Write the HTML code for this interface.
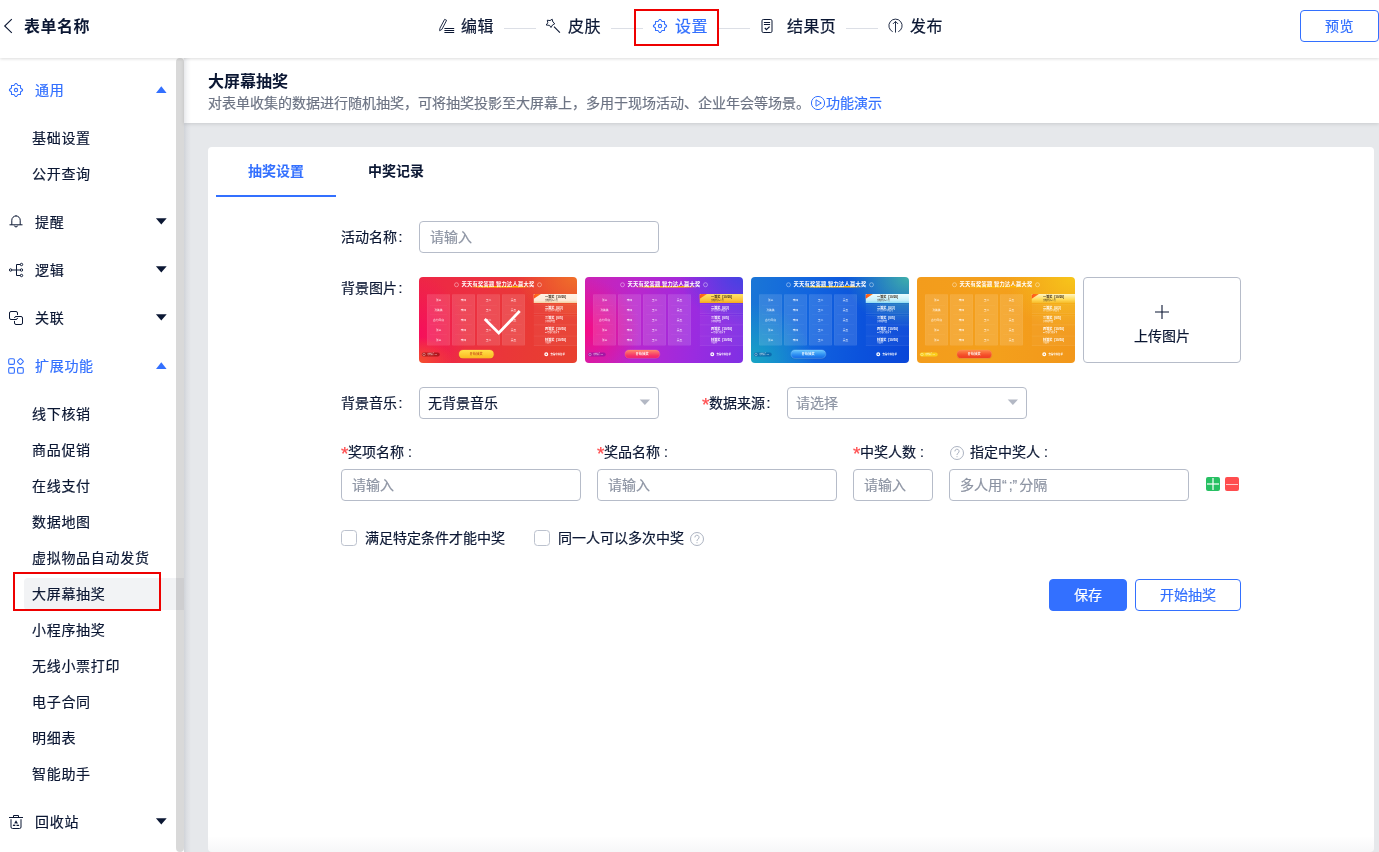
<!DOCTYPE html>
<html lang="zh-CN">
<head>
<meta charset="utf-8">
<title>大屏幕抽奖</title>
<style>
*{box-sizing:border-box;margin:0;padding:0}
html,body{width:1379px;height:852px;overflow:hidden;background:#e6e8eb}
body{-webkit-text-stroke:.2px;font-family:"Liberation Sans","Noto Sans CJK SC",sans-serif;font-size:14px;color:#0b1733;position:relative}
#root{position:absolute;left:0;top:0;width:1379px;height:852px;overflow:hidden;will-change:transform}
.abs{position:absolute}
b{font-weight:700}
#title,.bold{-webkit-text-stroke:0}
i{font-style:normal}
#top{position:absolute;left:0;top:0;width:1379px;height:58px;background:#fff;box-shadow:0 1px 3px rgba(0,0,0,.14);z-index:5}
#title{position:absolute;left:24px;top:15px;font-size:16px;font-weight:700;line-height:24px;letter-spacing:.5px;white-space:nowrap}
.step{position:absolute;top:15px;font-size:16px;line-height:24px;white-space:nowrap;letter-spacing:.4px}
.sline{position:absolute;top:28px;height:1px;width:32px;background:#dcdfe6}
#preview{position:absolute;left:1300px;top:10px;width:79px;height:32px;border:1px solid #3370ff;border-radius:4px;color:#3370ff;font-size:14px;line-height:30px;text-align:center;background:#fff;letter-spacing:.5px}
#side{position:absolute;left:0;top:58px;width:184px;height:794px;background:#fff}
#sbar{position:absolute;left:176px;top:58px;width:8px;height:794px;background:rgba(0,0,0,.15);border-radius:4px;z-index:3}
.m1{position:absolute;left:35px;font-size:14px;line-height:20px;white-space:nowrap;letter-spacing:.7px}
.m2{position:absolute;left:32px;font-size:14px;line-height:20px;white-space:nowrap;letter-spacing:.7px}
.blue{color:#3370ff}
.tri{position:absolute;left:155px;width:13px;height:8px;overflow:visible}
.ic{position:absolute;left:8px;width:16px;height:16px;overflow:visible}
#head{position:absolute;left:184px;top:58px;width:1195px;height:65px;background:#fff;box-shadow:0 1px 4px rgba(0,0,0,.13)}
#card{position:absolute;left:208px;top:147px;width:1166px;height:705px;background:#fff;border-radius:4px}
.lab{position:absolute;font-size:14px;line-height:20px;white-space:nowrap}
.inp{position:absolute;height:32px;border:1px solid #b6bcc9;border-radius:4px;background:#fff;font-size:14px;line-height:30px;padding-left:10px;color:#8d94a3;white-space:nowrap}
.red{color:#f5222d}
.cb{position:absolute;width:16px;height:16px;border:1px solid #bcc2ce;border-radius:3.5px;background:#fff}
.btn{position:absolute;height:32px;border-radius:4px;font-size:14px;line-height:30px;text-align:center;border:1px solid #3370ff}
.dd{position:absolute;width:12px;height:7px;overflow:visible}
/* thumbnails */
.th{position:absolute;top:277px;width:158px;height:86px;border-radius:4px;overflow:hidden}
.thi{-webkit-text-stroke:0;position:absolute;left:0;top:0;width:632px;height:344px;transform:scale(.25);transform-origin:0 0;color:#fff}
.tring{position:absolute;width:18px;height:18px;border:2.5px solid rgba(255,255,255,.8);border-radius:50%}
.ttl{position:absolute;left:0;top:14px;width:632px;text-align:center;font-size:21px;font-weight:700;line-height:32px;white-space:nowrap;letter-spacing:.9px}
.tul{position:absolute;left:196px;top:36px;width:250px;height:6px;background:linear-gradient(90deg,rgba(255,190,0,0) 0%,#ffc400 22%,#ffb400 85%,rgba(255,176,0,0) 100%)}
.gcol{position:absolute;top:69px;width:92px;height:205px;padding-top:3px;background:rgba(255,255,255,.13);border:1px solid rgba(255,255,255,.12);border-radius:4px}
.gc{height:39.7px;margin:0 11px;border-bottom:1.5px solid rgba(255,255,255,.14);font-size:11px;line-height:40px;text-align:center;white-space:nowrap;color:rgba(255,255,255,.9)}
.gc.nb{border-bottom:none}
.pz{position:absolute;left:459px;width:173px;height:38px;padding-left:45px;border-top:1.5px solid rgba(255,255,255,.22);border-bottom:1.5px solid rgba(255,255,255,.22);background:rgba(255,255,255,.04)}
.pz b{display:block;font-size:12.5px;line-height:14px;margin-top:4px;white-space:nowrap;word-spacing:4px}
.pz i{display:block;font-size:8px;line-height:9px;margin-top:1px;white-space:nowrap}
.pz.p1{border:none;height:36px;color:#3a2a1a;overflow:hidden}
.rib{position:absolute;left:-22px;top:-4px;width:70px;height:13px;background:linear-gradient(90deg,#ff3b1a,#ff9a1a);transform:rotate(-33deg)}
.bdg{position:absolute;left:11px;top:302px;width:72px;height:16px;border-radius:8px;font-size:7px;line-height:16px;padding-left:22px;white-space:nowrap;color:rgba(255,255,255,.9)}
.bdr{position:absolute;left:3px;top:2px;width:12px;height:12px;border:2px solid rgba(255,255,255,.7);border-radius:50%}
.go{position:absolute;left:159px;top:291px;width:141px;height:35px;border-radius:18px;border:1.5px solid;font-size:12px;font-weight:700;line-height:32px;text-align:center;letter-spacing:1px;box-shadow:0 2px 4px rgba(0,0,0,.15)}
.vring{position:absolute;left:501px;top:301px;width:16px;height:16px;border:5px solid #fff;border-radius:50%}
.vtxt{position:absolute;left:526px;top:301px;font-size:9.5px;font-weight:700;line-height:16px;white-space:nowrap}

.star{position:absolute;font-size:19px;line-height:20px;color:#ff4d4f;font-family:"Liberation Sans",sans-serif}
.co{margin-left:1.5px}
.q{letter-spacing:2px}

</style>
</head>
<body>
<div id="root">
<!-- TOP BAR -->
<div id="top">
  <svg class="abs" style="left:3px;top:18px" width="10" height="16" viewBox="0 0 10 16"><path d="M8.8 1.2 L1.7 8 L8.8 14.8" fill="none" stroke="#0b1733" stroke-width="1.1"/></svg>
  <div id="title">表单名称</div>

  <svg class="abs" style="left:438px;top:17px" width="18" height="18" viewBox="0 0 18 18" fill="none" stroke="#0b1733">
    <path d="M6.6 2.4 L8.6 3.3 L3.9 12.4 L1.6 13.7 L1.9 11.3 Z" stroke-width=".9" stroke-linejoin="round"/>
    <path d="M6.4 11.5 H16.2 M6.4 13.5 H16.2 M6.4 15.5 H16.2" stroke-width="1"/>
  </svg>
  <div class="step" style="left:461px">编辑</div>
  <div class="sline" style="left:504px"></div>

  <svg class="abs" style="left:544px;top:17px" width="18" height="18" viewBox="0 0 18 18" fill="none" stroke="#0b1733">
    <path d="M8.2 2.2 L8.9 5.0 L10.8 6.7 L8.6 7.9 L7.0 10.5 L5.6 8.4 L2.2 8.0 L3.8 5.8 L3.3 3.2 L6.0 3.6 Z" stroke-width=".95" stroke-linejoin="round"/>
    <path d="M10 9.7 L15.9 15.6" stroke-width="1.1"/>
  </svg>
  <div class="step" style="left:568px">皮肤</div>
  <div class="sline" style="left:611px"></div>

  <svg class="abs" style="left:652px;top:18px" width="16" height="16" viewBox="0 0 16 16"><path d="M7.45 1.45 L8.55 1.45 L10.00 3.50 L12.50 3.50 L12.50 6.00 L14.55 7.45 L14.55 8.55 L12.50 10.00 L12.50 12.50 L10.00 12.50 L8.55 14.55 L7.45 14.55 L6.00 12.50 L3.50 12.50 L3.50 10.00 L1.45 8.55 L1.45 7.45 L3.50 6.00 L3.50 3.50 L6.00 3.50 Z" fill="none" stroke="#3370ff" stroke-width="1.05" stroke-linejoin="round"/><circle cx="8" cy="8" r="1.65" fill="none" stroke="#3370ff" stroke-width="1.05"/></svg>
  <div class="step blue" style="left:675px">设置</div>
  <div class="abs" style="left:634px;top:9px;width:85px;height:37px;border:2px solid #ee0000"></div>
  <div class="sline" style="left:719px;width:31px"></div>

  <svg class="abs" style="left:759px;top:17px" width="16" height="18" viewBox="0 0 16 18" fill="none" stroke="#0b1733">
    <rect x="3" y="2.5" width="10" height="13" rx="1.3" stroke-width="1"/>
    <path d="M4.9 5.5 H11.1 M4.9 7.5 H11.1" stroke-width="1"/>
    <path d="M5.8 10.9 L7.4 12.6 L10.6 9.6" stroke-width="1.3"/>
  </svg>
  <div class="step" style="left:787px">结果页</div>
  <div class="sline" style="left:846px"></div>

  <svg class="abs" style="left:887px;top:17.3px" width="18" height="18" viewBox="0 0 18 18" fill="none" stroke="#0b1733">
    <path d="M5.7 14.7 A6.6 6.6 0 1 1 11.3 14.7" stroke-width=".9"/>
    <path d="M8.5 4.6 V15.6 M6.0 6.9 L8.5 4.4 L11.0 6.9" stroke-width=".9"/>
  </svg>
  <div class="step" style="left:910px">发布</div>
  <div id="preview">预览</div>
</div>

<!-- SIDEBAR -->
<div id="side"></div>
<div id="sbar"></div>
<div id="menu">
  <svg class="ic" style="top:82px" viewBox="0 0 16 16"><path d="M7.45 1.45 L8.55 1.45 L10.00 3.50 L12.50 3.50 L12.50 6.00 L14.55 7.45 L14.55 8.55 L12.50 10.00 L12.50 12.50 L10.00 12.50 L8.55 14.55 L7.45 14.55 L6.00 12.50 L3.50 12.50 L3.50 10.00 L1.45 8.55 L1.45 7.45 L3.50 6.00 L3.50 3.50 L6.00 3.50 Z" fill="none" stroke="#3370ff" stroke-width="1.05" stroke-linejoin="round"/><circle cx="8" cy="8" r="1.65" fill="none" stroke="#3370ff" stroke-width="1.05"/></svg>
  <div class="m1 blue" style="top:80px">通用</div><svg class="tri" style="top:86px" viewBox="0 0 13 8"><path d="M6.3 0.3 L11.6 6.9 H1 Z" fill="#3370ff"/></svg>
  <div class="m2" style="top:128px">基础设置</div>
  <div class="m2" style="top:164px">公开查询</div>

  <svg class="ic" style="top:214px" viewBox="0 0 16 16" fill="none" stroke="#0b1733" stroke-width="1">
    <path d="M3.8 10.8 V6.2 A4.2 4.2 0 0 1 12.2 6.2 V10.8"/><path d="M1.5 10.8 H14.5"/><path d="M6.3 11.6 A1.75 1.75 0 0 0 9.7 11.6"/><path d="M8 1.2 V2"/>
  </svg>
  <div class="m1" style="top:212px">提醒</div><svg class="tri" style="top:218px" viewBox="0 0 13 8"><path d="M0.9 0.2 H11.7 L6.3 6.6 Z" fill="#0b1733"/></svg>

  <svg class="ic" style="top:262px" viewBox="0 0 16 16" fill="none" stroke="#0b1733" stroke-width="1">
    <circle cx="2.6" cy="8" r="1.2"/><circle cx="13.5" cy="2.5" r="1.2"/><circle cx="13.5" cy="8" r="1.2"/><circle cx="13.5" cy="13.5" r="1.2"/>
    <path d="M3.8 8 H12.3 M12.3 2.5 H8.5 V13.5 H12.3"/>
  </svg>
  <div class="m1" style="top:260px">逻辑</div><svg class="tri" style="top:266px" viewBox="0 0 13 8"><path d="M0.9 0.2 H11.7 L6.3 6.6 Z" fill="#0b1733"/></svg>

  <svg class="ic" style="top:310px" viewBox="0 0 16 16" fill="none" stroke="#0b1733" stroke-width="1" stroke-linecap="round">
    <path d="M9.5 4.6 V3 A1.5 1.5 0 0 0 8 1.5 H3 A1.5 1.5 0 0 0 1.5 3 V8 A1.5 1.5 0 0 0 3 9.500 H8 A1.5 1.5 0 0 0 9.5 8.3"/>
    <path d="M6.5 7.6 A1.5 1.5 0 0 1 8 6.5 H13 A1.5 1.5 0 0 1 14.5 8 V13 A1.5 1.5 0 0 1 13 14.5 H8 A1.5 1.5 0 0 1 6.5 13 V11.3"/>
  </svg>
  <div class="m1" style="top:308px">关联</div><svg class="tri" style="top:314px" viewBox="0 0 13 8"><path d="M0.9 0.2 H11.7 L6.3 6.6 Z" fill="#0b1733"/></svg>

  <svg class="ic" style="top:358px" viewBox="0 0 16 16" fill="none" stroke="#3370ff" stroke-width="1.1">
    <rect x="0.7" y="0.7" width="5.7" height="5.7" rx="1.3"/><rect x="0.7" y="9.6" width="5.7" height="5.7" rx="1.3"/><rect x="9.6" y="9.6" width="5.7" height="5.7" rx="1.3"/>
    <rect x="10.1" y="1.2" width="4.6" height="4.6" rx="0.9" transform="rotate(45 12.4 3.5)"/>
  </svg>
  <div class="m1 blue" style="top:356px">扩展功能</div><svg class="tri" style="top:362px" viewBox="0 0 13 8"><path d="M6.3 0.3 L11.6 6.9 H1 Z" fill="#3370ff"/></svg>
  <div class="m2" style="top:404px">线下核销</div>
  <div class="m2" style="top:440px">商品促销</div>
  <div class="m2" style="top:476px">在线支付</div>
  <div class="m2" style="top:512px">数据地图</div>
  <div class="m2" style="top:548px">虚拟物品自动发货</div>
  <div class="abs" style="left:24px;top:578px;width:160px;height:32px;background:#f2f3f5;border-radius:4px 0 0 4px"></div>
  <div class="abs" style="left:13px;top:572px;width:148px;height:39px;border:2px solid #ee0000"></div>
  <div class="m2" style="top:584px">大屏幕抽奖</div>
  <div class="m2" style="top:620px">小程序抽奖</div>
  <div class="m2" style="top:656px">无线小票打印</div>
  <div class="m2" style="top:692px">电子合同</div>
  <div class="m2" style="top:728px">明细表</div>
  <div class="m2" style="top:764px">智能助手</div>

  <svg class="ic" style="top:814px" viewBox="0 0 16 16" fill="none" stroke="#0b1733" stroke-width="1">
    <path d="M1 3.500 H15 M5.5 3.5 V1.5 H10.5 V3.5"/>
    <path d="M3 5.2 V13 A1.5 1.5 0 0 0 4.5 14.5 H11.500 A1.5 1.5 0 0 0 13 13 V5.2"/>
    <path d="M8 7.4 L10.3 11.4 H5.7 Z" stroke-width="1.2" stroke-dasharray="2.6 1.2"/>
  </svg>
  <div class="m1" style="top:812px">回收站</div><svg class="tri" style="top:818px" viewBox="0 0 13 8"><path d="M0.9 0.2 H11.7 L6.3 6.6 Z" fill="#0b1733"/></svg>
</div>

<!-- MAIN HEADER -->
<div id="head">
  <div class="abs bold" style="left:24px;top:12px;font-size:16px;font-weight:700;line-height:24px">大屏幕抽奖</div>
  <div class="abs" style="left:24px;top:35px;font-size:14px;line-height:20px;color:#6d7484;white-space:nowrap">对表单收集的数据进行随机抽奖，可将抽奖投影至大屏幕上，多用于现场活动、企业年会等场景。</div>
  <svg class="abs" style="left:626px;top:37px" width="16" height="16" viewBox="0 0 16 16" fill="none" stroke="#3370ff" stroke-width="1"><circle cx="8" cy="8" r="6.6"/><path d="M6 4.8 L11.3 8 L6 11.2 Z" stroke-linejoin="round"/></svg>
  <div class="abs blue" style="left:642px;top:35px;font-size:14px;line-height:20px;white-space:nowrap">功能演示</div>
</div>

<!-- CARD -->
<div id="card"></div>
<div class="abs" style="left:208px;top:836px;width:1166px;height:16px;border-radius:0 0 4px 4px;background:linear-gradient(180deg,rgba(30,40,70,0) 0%,rgba(30,40,70,.04) 100%)"></div>
<div class="abs" style="left:184px;top:58px;width:7px;height:794px;background:linear-gradient(90deg,rgba(20,30,60,.10) 0%,rgba(20,30,60,.04) 45%,rgba(20,30,60,0) 100%)"></div>
<div id="form">
  <div class="lab blue bold" style="left:248px;top:161px;font-weight:700">抽奖设置</div>
  <div class="lab bold" style="left:368px;top:161px;font-weight:700">中奖记录</div>
  <div class="abs" style="left:216px;top:195px;width:120px;height:2px;background:#3370ff"></div>

  <div class="lab" style="left:341px;top:227px">活动名称<span class="co">:</span></div>
  <div class="inp" style="left:419px;top:221px;width:240px">请输入</div>

  <div class="lab" style="left:341px;top:278px">背景图片<span class="co">:</span></div>
<div class="th" style="left:419px;background:radial-gradient(ellipse 38% 50% at 100% 0%,#f0702a 0%,rgba(240,112,42,0) 100%),radial-gradient(ellipse 22% 30% at 0% 100%,#f4502c 0%,rgba(244,80,44,0) 100%),radial-gradient(ellipse 30% 65% at 0% 65%,#f60f5c 0%,rgba(246,15,92,0) 100%),linear-gradient(100deg,#ee2646 0%,#ec3040 35%,#e93a35 70%,#e8402f 100%)">
<div class="thi">
<div class="tring" style="left:141px;top:22px"></div><div class="tring" style="left:473px;top:22px"></div>
<div class="tul"></div>
<div class="ttl">天天有奖答题 智力达人赢大奖</div>
<div class="gcol" style="left:32px">
<div class="gc">张三</div>
<div class="gc">孙美美</div>
<div class="gc">古力风袅</div>
<div class="gc">张三</div>
<div class="gc nb">张三</div>
</div>
<div class="gcol" style="left:132px">
<div class="gc">李四</div>
<div class="gc">李四</div>
<div class="gc">李四</div>
<div class="gc">李四</div>
<div class="gc nb">李四</div>
</div>
<div class="gcol" style="left:232px">
<div class="gc">王二</div>
<div class="gc">王二</div>
<div class="gc">王二</div>
<div class="gc">王二</div>
<div class="gc nb">王二</div>
</div>
<div class="gcol" style="left:332px">
<div class="gc">吴五</div>
<div class="gc">吴五</div>
<div class="gc">吴五</div>
<div class="gc">吴五</div>
<div class="gc nb">吴五</div>
</div>
<div class="pz p1" style="top:68px;background:linear-gradient(180deg,#fff3e6 0%,#fdebd8 70%,#f5cf9e 100%)"><div class="rib"></div><b>一等奖 [10/20]</b><i>沃柑橙子1公斤</i></div>
<div class="pz" style="top:110px"><b>二等奖 [0/3]</b><i>蓝牙耳机价值百元</i></div>
<div class="pz" style="top:153px"><b>三等奖 [0/5]</b><i>小米充电宝</i></div>
<div class="pz" style="top:195px"><b>四等奖 [10/10]</b><i>50元话费充值卡</i></div>
<div class="pz" style="top:238px"><b>特等奖 [10/10]</b><i>代金券</i></div>
<div class="bdg" style="background:rgba(120,0,0,.55)"><span class="bdr"></span>素材编号 01</div>
<div class="go" style="background:linear-gradient(180deg,#ffe14a 0%,#fbb820 100%);border-color:#ffd23a;color:#c8501a">开始抽奖</div>
<div class="vring"></div><div class="vtxt">查看中奖名单</div>
<svg class="abs" style="left:0;top:0" width="632" height="344"><path d="M263 168 L319 224 L403 136" fill="none" stroke="#fff" stroke-width="11"/></svg>
</div></div><div class="th" style="left:585px;background:radial-gradient(ellipse 40% 55% at 100% 0%,#4542e2 0%,rgba(69,66,226,0) 100%),radial-gradient(ellipse 35% 60% at 0% 62%,#f40c86 0%,rgba(244,12,134,0) 100%),linear-gradient(95deg,#cc22b4 0%,#b727cf 35%,#9a2be0 70%,#7f30e4 100%)">
<div class="thi">
<div class="tring" style="left:141px;top:22px"></div><div class="tring" style="left:473px;top:22px"></div>
<div class="tul"></div>
<div class="ttl">天天有奖答题 智力达人赢大奖</div>
<div class="gcol" style="left:32px">
<div class="gc">张三</div>
<div class="gc">孙美美</div>
<div class="gc">古力风袅</div>
<div class="gc">张三</div>
<div class="gc nb">张三</div>
</div>
<div class="gcol" style="left:132px">
<div class="gc">李四</div>
<div class="gc">李四</div>
<div class="gc">李四</div>
<div class="gc">李四</div>
<div class="gc nb">李四</div>
</div>
<div class="gcol" style="left:232px">
<div class="gc">王二</div>
<div class="gc">王二</div>
<div class="gc">王二</div>
<div class="gc">王二</div>
<div class="gc nb">王二</div>
</div>
<div class="gcol" style="left:332px">
<div class="gc">吴五</div>
<div class="gc">吴五</div>
<div class="gc">吴五</div>
<div class="gc">吴五</div>
<div class="gc nb">吴五</div>
</div>
<div class="pz p1" style="top:68px;background:linear-gradient(180deg,#ffe36a 0%,#fbc43a 70%,#f3a820 100%)"><div class="rib"></div><b>一等奖 [10/20]</b><i>沃柑橙子1公斤</i></div>
<div class="pz" style="top:110px"><b>二等奖 [0/3]</b><i>蓝牙耳机价值百元</i></div>
<div class="pz" style="top:153px"><b>三等奖 [0/5]</b><i>小米充电宝</i></div>
<div class="pz" style="top:195px"><b>四等奖 [10/10]</b><i>50元话费充值卡</i></div>
<div class="pz" style="top:238px"><b>特等奖 [10/10]</b><i>代金券</i></div>
<div class="bdg" style="background:rgba(120,20,160,.55)"><span class="bdr"></span>素材编号 01</div>
<div class="go" style="background:linear-gradient(180deg,#ff8a6a 0%,#f5306a 70%,#ee1f74 100%);border-color:#ff9aa8;color:#fff">开始抽奖</div>
<div class="vring"></div><div class="vtxt">查看中奖名单</div>
</div></div><div class="th" style="left:751px;background:radial-gradient(ellipse 40% 60% at 100% 0%,#3fb0aa 0%,rgba(63,176,170,0) 100%),radial-gradient(ellipse 40% 70% at 0% 100%,#17a5c4 0%,rgba(23,165,196,0) 100%),linear-gradient(95deg,#1a76d6 0%,#1265df 35%,#0b52dc 70%,#0a46d8 100%)">
<div class="thi">
<div class="tring" style="left:141px;top:22px"></div><div class="tring" style="left:473px;top:22px"></div>
<div class="tul"></div>
<div class="ttl">天天有奖答题 智力达人赢大奖</div>
<div class="gcol" style="left:32px">
<div class="gc">张三</div>
<div class="gc">孙美美</div>
<div class="gc">古力风袅</div>
<div class="gc">张三</div>
<div class="gc nb">张三</div>
</div>
<div class="gcol" style="left:132px">
<div class="gc">李四</div>
<div class="gc">李四</div>
<div class="gc">李四</div>
<div class="gc">李四</div>
<div class="gc nb">李四</div>
</div>
<div class="gcol" style="left:232px">
<div class="gc">王二</div>
<div class="gc">王二</div>
<div class="gc">王二</div>
<div class="gc">王二</div>
<div class="gc nb">王二</div>
</div>
<div class="gcol" style="left:332px">
<div class="gc">吴五</div>
<div class="gc">吴五</div>
<div class="gc">吴五</div>
<div class="gc">吴五</div>
<div class="gc nb">吴五</div>
</div>
<div class="pz p1" style="top:68px;background:linear-gradient(180deg,#eafcff 0%,#c6f0fa 70%,#8fdcf2 100%)"><div class="rib"></div><b>一等奖 [10/20]</b><i>沃柑橙子1公斤</i></div>
<div class="pz" style="top:110px"><b>二等奖 [0/3]</b><i>蓝牙耳机价值百元</i></div>
<div class="pz" style="top:153px"><b>三等奖 [0/5]</b><i>小米充电宝</i></div>
<div class="pz" style="top:195px"><b>四等奖 [10/10]</b><i>50元话费充值卡</i></div>
<div class="pz" style="top:238px"><b>特等奖 [10/10]</b><i>代金券</i></div>
<div class="bdg" style="background:rgba(0,60,140,.45)"><span class="bdr"></span>素材编号 01</div>
<div class="go" style="background:linear-gradient(180deg,#6cc8ff 0%,#2a8cf2 60%,#1468e4 100%);border-color:#bfe6ff;color:#fff">开始抽奖</div>
<div class="vring"></div><div class="vtxt">查看中奖名单</div>
</div></div><div class="th" style="left:917px;background:radial-gradient(ellipse 45% 65% at 100% 0%,#f7c61a 0%,rgba(247,198,26,0) 100%),linear-gradient(95deg,#f39c1c 0%,#f4a01c 50%,#f2971a 100%)">
<div class="thi">
<div class="tring" style="left:141px;top:22px"></div><div class="tring" style="left:473px;top:22px"></div>
<div class="tul"></div>
<div class="ttl">天天有奖答题 智力达人赢大奖</div>
<div class="gcol" style="left:32px">
<div class="gc">张三</div>
<div class="gc">孙美美</div>
<div class="gc">古力风袅</div>
<div class="gc">张三</div>
<div class="gc nb">张三</div>
</div>
<div class="gcol" style="left:132px">
<div class="gc">李四</div>
<div class="gc">李四</div>
<div class="gc">李四</div>
<div class="gc">李四</div>
<div class="gc nb">李四</div>
</div>
<div class="gcol" style="left:232px">
<div class="gc">王二</div>
<div class="gc">王二</div>
<div class="gc">王二</div>
<div class="gc">王二</div>
<div class="gc nb">王二</div>
</div>
<div class="gcol" style="left:332px">
<div class="gc">吴五</div>
<div class="gc">吴五</div>
<div class="gc">吴五</div>
<div class="gc">吴五</div>
<div class="gc nb">吴五</div>
</div>
<div class="pz p1" style="top:68px;background:linear-gradient(180deg,#fff6c4 0%,#ffdc5a 60%,#f7bb2a 100%)"><div class="rib"></div><b>一等奖 [10/20]</b><i>沃柑橙子1公斤</i></div>
<div class="pz" style="top:110px"><b>二等奖 [0/3]</b><i>蓝牙耳机价值百元</i></div>
<div class="pz" style="top:153px"><b>三等奖 [0/5]</b><i>小米充电宝</i></div>
<div class="pz" style="top:195px"><b>四等奖 [10/10]</b><i>50元话费充值卡</i></div>
<div class="pz" style="top:238px"><b>特等奖 [10/10]</b><i>代金券</i></div>
<div class="bdg" style="background:rgba(250,215,30,.85)"><span class="bdr"></span>素材编号 01</div>
<div class="go" style="background:linear-gradient(180deg,#ff8a4a 0%,#f5502a 60%,#ee3a20 100%);border-color:#ffa070;color:#fff">开始抽奖</div>
<div class="vring"></div><div class="vtxt">查看中奖名单</div>
</div></div>
  <div class="abs" style="left:1083px;top:277px;width:158px;height:86px;border:1px solid #b6bcc9;border-radius:4px;background:#fff"></div>
  <svg class="abs" style="left:1154px;top:304px" width="16" height="16" viewBox="0 0 16 16"><path d="M8 1 V15 M1 8 H15" stroke="#0b1733" stroke-width="1.1" fill="none"/></svg>
  <div class="lab" style="left:1134px;top:326px">上传图片</div>

  <div class="lab" style="left:341px;top:393px">背景音乐<span class="co">:</span></div>
  <div class="inp" style="left:419px;top:387px;width:240px;color:#0b1733;padding-left:8px">无背景音乐</div>
  <svg class="dd" style="left:639px;top:399.3px" viewBox="0 0 12 7"><path d="M0.7 0.4 H11 L5.85 6 Z" fill="#b3b8c4"/></svg>
  <div class="star" style="left:702px;top:395px">*</div><div class="lab" style="left:709px;top:393px">数据来源<span class="co">:</span></div>
  <div class="inp" style="left:787px;top:387px;width:240px;padding-left:8px">请选择</div>
  <svg class="dd" style="left:1007px;top:399.3px" viewBox="0 0 12 7"><path d="M0.7 0.4 H11 L5.85 6 Z" fill="#b3b8c4"/></svg>

  <div class="star" style="left:341px;top:444px">*</div><div class="lab" style="left:348px;top:442px">奖项名称 :</div>
  <div class="star" style="left:597px;top:444px">*</div><div class="lab" style="left:604px;top:442px">奖品名称 :</div>
  <div class="star" style="left:853px;top:444px">*</div><div class="lab" style="left:860px;top:442px">中奖人数 :</div>
  <svg class="abs" style="left:949px;top:445px" width="16" height="16" viewBox="0 0 16 16" fill="none" stroke="#a3aaba" stroke-width=".9"><circle cx="8" cy="8" r="6.5"/><path d="M5.9 6.4 A2.1 2.1 0 1 1 8.9 8.2 Q8 8.8 8 10"/><path d="M8 11.2 V12.2"/></svg>
  <div class="lab" style="left:970px;top:442px">指定中奖人 :</div>
  <div class="inp" style="left:341px;top:469px;width:240px">请输入</div>
  <div class="inp" style="left:597px;top:469px;width:240px">请输入</div>
  <div class="inp" style="left:853px;top:469px;width:80px">请输入</div>
  <div class="inp" style="left:949px;top:469px;width:240px">多人用<span class="q">“</span>;<span class="q">”</span>分隔</div>
  <div class="abs" style="left:1206px;top:477px;width:14px;height:14px;border-radius:2px;background:#27c063"><div class="abs" style="left:6px;top:1px;width:2px;height:12px;background:rgba(255,255,255,.6)"></div><div class="abs" style="left:1px;top:6px;width:12px;height:2px;background:rgba(255,255,255,.6)"></div></div>
  <div class="abs" style="left:1225px;top:477px;width:14px;height:14px;border-radius:2px;background:#ff4d4f"><div class="abs" style="left:1px;top:6.5px;width:12px;height:1.6px;background:rgba(255,255,255,.7)"></div></div>

  <div class="cb" style="left:341px;top:530px"></div>
  <div class="lab" style="left:365px;top:528px">满足特定条件才能中奖</div>
  <div class="cb" style="left:534px;top:530px"></div>
  <div class="lab" style="left:558px;top:528px">同一人可以多次中奖</div>
  <svg class="abs" style="left:689px;top:531px" width="16" height="16" viewBox="0 0 16 16" fill="none" stroke="#a3aaba" stroke-width=".9"><circle cx="8" cy="8" r="6.5"/><path d="M5.9 6.4 A2.1 2.1 0 1 1 8.9 8.2 Q8 8.8 8 10"/><path d="M8 11.2 V12.2"/></svg>

  <div class="btn" style="left:1049px;top:579px;width:78px;background:#3370ff;color:#fff">保存</div>
  <div class="btn" style="left:1135px;top:579px;width:106px;background:#fff;color:#3370ff">开始抽奖</div>
</div>

</div>
</body>
</html>
